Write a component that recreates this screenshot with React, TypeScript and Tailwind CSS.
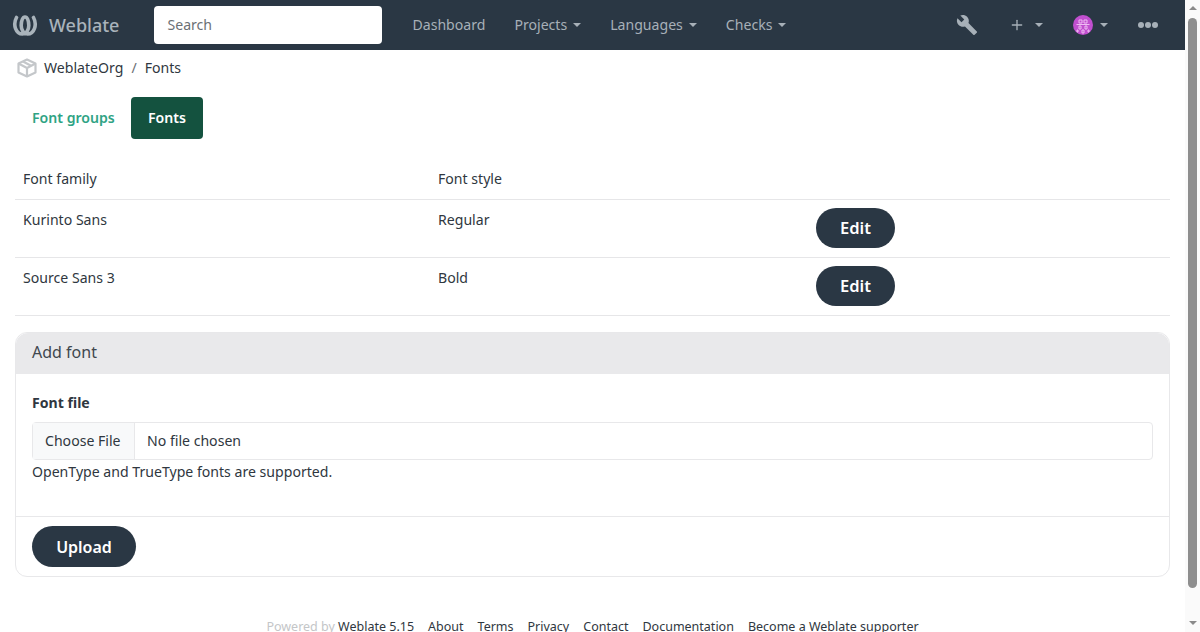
import { Plus } from 'lucide-react';
import { MdBuild } from 'react-icons/md';

const font = { fontFamily: '"Noto Sans", sans-serif' };

function Caret() {
  return <span className="ml-[6px] inline-block h-0 w-0 border-x-[4px] border-t-[4px] border-x-transparent border-t-[#a7b0b8]" />;
}

function NavItem({ label, caret }: { label: string; caret?: boolean }) {
  return (
    <a className="flex items-center text-[#a7b0b8]">
      {label}
      {caret && <Caret />}
    </a>
  );
}

function Logo() {
  return (
    <svg width="26" height="22" viewBox="0 0 26 22" fill="none" stroke="#a9b3bb" strokeLinecap="round">
      <path d="M4.5 3.5 C0.5 11 4 20 10.5 20 C14 20 16.8 16.5 16.8 11.5 C16.8 6.5 15.2 3 13 3 C10.8 3 9.2 6.5 9.2 11.5 C9.2 16.5 12 20 15.5 20 C22 20 25.5 11 21.5 3.5" strokeWidth="3.6" />
    </svg>
  );
}

function OrgIcon() {
  return (
    <svg width="20" height="20" viewBox="0 0 20 20" fill="none" stroke="#c4c7ca" strokeWidth="2.2" strokeLinejoin="round">
      <path d="M10 1.5 L18.5 5.5 V14.5 L10 18.5 L1.5 14.5 V5.5 Z" />
      <path d="M1.5 5.5 L10 10 L18.5 5.5 M10 10 V18.5 M6 3.5 L14.5 8" />
    </svg>
  );
}

function Avatar() {
  return (
    <svg width="20" height="20" viewBox="0 0 20 20">
      <circle cx="10" cy="10" r="10" fill="#c14fcf" />
      <path d="M6 5h3v3h-3zM11 5h3v3h-3zM3.5 9.5h13M6 11h2v3h-2zM12 11h2v3h-2zM9 15h2v3h-2zM4 15h1v2h-1zM15 15h1v2h-1z" fill="none" stroke="#efbcf3" strokeWidth="1" />
    </svg>
  );
}

function EditButton() {
  return (
    <button className="h-[40px] w-[79px] rounded-[20px] bg-[#2a3744] text-[16.5px] font-semibold text-white">Edit</button>
  );
}

function Row({ family, style }: { family: string; style: string }) {
  return (
    <div className="grid h-[58px] grid-cols-[415px_378px_1fr] border-b border-[#e6e6e8] pl-[8px]">
      <div className="pt-[8px]">{family}</div>
      <div className="pt-[8px]">{style}</div>
      <div className="pt-[8px]">
        <EditButton />
      </div>
    </div>
  );
}

export default function App() {
  return (
    <div className="flex h-[632px] overflow-hidden bg-white text-[14.1px] leading-[24px] text-[#2f3740]" style={font}>
      <div className="flex w-[1185px] flex-col">
        <nav className="flex h-[50px] shrink-0 items-center bg-[#2a3744] pl-[12px] pr-[27px]">
          <Logo />
          <span className="ml-[11px] text-[18px] font-medium text-[#a9b3bb]">Weblate</span>
          <div className="ml-[35px] flex h-[38px] w-[228px] items-center rounded-[4px] bg-white px-[13px] text-[#6b7075]">Search</div>
          <div className="ml-[30px] flex gap-[29px]">
            <NavItem label="Dashboard" />
            <NavItem label="Projects" caret />
            <NavItem label="Languages" caret />
            <NavItem label="Checks" caret />
          </div>
          <div className="ml-auto flex items-center text-[#a7b0b8]">
            <MdBuild size={22} />
            <Plus size={16} className="ml-[31px]" />
            <span className="ml-[4px] flex items-center"><Caret /></span>
            <span className="ml-[30px] flex items-center"><Avatar /></span>
            <span className="ml-[1px] flex items-center"><Caret /></span>
            <span className="ml-[30px] flex gap-[1px]">
              <i className="h-[6px] w-[6px] rounded-full bg-[#a7b0b8]" />
              <i className="h-[6px] w-[6px] rounded-full bg-[#a7b0b8]" />
              <i className="h-[6px] w-[6px] rounded-full bg-[#a7b0b8]" />
            </span>
          </div>
        </nav>

        <div className="flex h-[36px] shrink-0 items-center pl-[17px]">
          <OrgIcon />
          <span className="ml-[7px]">WeblateOrg</span>
          <span className="mx-[8px] text-[#6b7075]">/</span>
          <span>Fonts</span>
        </div>

        <div className="mt-[11px] flex shrink-0 pl-[15px]">
          <a className="flex h-[42px] w-[116px] items-center pl-[17px] font-semibold text-[#2fa384]">Font groups</a>
          <a className="flex h-[42px] w-[72px] items-center justify-center rounded-[4px] bg-[#14523f] font-semibold text-white">Fonts</a>
        </div>

        <div className="mx-[15px] mt-[19px] shrink-0">
          <div className="grid h-[42px] grid-cols-[415px_378px_1fr] items-center border-b border-[#e6e6e8] pl-[8px]">
            <div>Font family</div>
            <div>Font style</div>
            <div />
          </div>
          <Row family="Kurinto Sans" style="Regular" />
          <Row family="Source Sans 3" style="Bold" />
        </div>

        <div className="mx-[15px] mt-[16px] h-[245px] shrink-0 rounded-[12px] border border-[#e8e8ea]">
          <div className="flex h-[41px] items-center rounded-t-[12px] bg-[#e9e9eb] px-[16px] pb-[3px] text-[16px] text-[#40474e]">Add font</div>
          <div className="h-[143px] border-b border-[#e8e8ea] px-[16px] pt-[17px]">
            <div className="font-bold">Font file</div>
            <div className="mt-[7px] flex h-[38px] items-center rounded-[4px] border border-[#e8e8ea]">
              <span className="flex h-full w-[102px] items-center border-r border-[#e8e8ea] bg-[#f8f9fa] pl-[12px]">Choose File</span>
              <span className="ml-[12px]">No file chosen</span>
            </div>
            <div>OpenType and TrueType fonts are supported.</div>
          </div>
          <div className="px-[16px] pt-[9px]">
            <button className="h-[41px] w-[104px] rounded-[21px] bg-[#2a3744] text-[16px] font-semibold text-white">Upload</button>
          </div>
        </div>

        <div className="mt-[38px] flex shrink-0 justify-center gap-[14px] text-[12.5px]">
          <span><span className="text-[#c4c6c8]">Powered by </span>Weblate 5.15</span>
          <span>About</span>
          <span>Terms</span>
          <span>Privacy</span>
          <span>Contact</span>
          <span>Documentation</span>
          <span>Become a Weblate supporter</span>
        </div>
      </div>

      <div className="flex w-[15px] flex-col items-center bg-[#fafafa]">
        <span className="mt-[6px] h-0 w-0 border-x-[4px] border-b-[4px] border-x-transparent border-b-[#8a8a8a]" />
        <span className="mt-[8px] h-[570px] w-[9px] rounded-[5px] bg-[#8e8e8e]" />
        <span className="mt-auto mb-[7px] h-0 w-0 border-x-[4px] border-t-[4px] border-x-transparent border-t-[#8a8a8a]" />
      </div>
    </div>
  );
}
